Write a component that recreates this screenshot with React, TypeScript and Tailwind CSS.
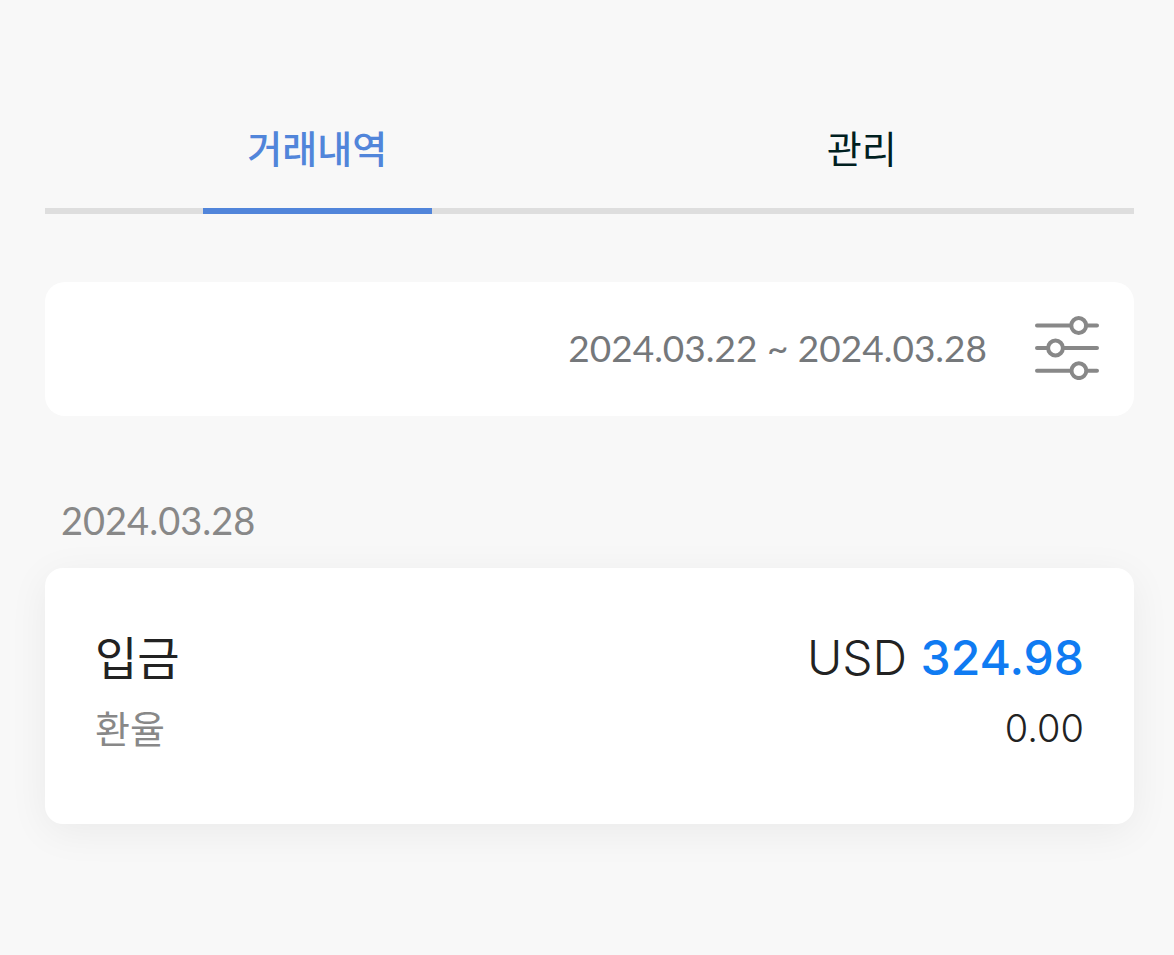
import { useState } from "react";
import clsx from "clsx";

interface Transaction {
  type: string;
  currency: string;
  amount: string;
  rate: string;
}

const tabs = ["거래내역", "관리"];

const groups: { date: string; items: Transaction[] }[] = [
  {
    date: "2024.03.28",
    items: [{ type: "입금", currency: "USD", amount: "324.98", rate: "0.00" }],
  },
];

const FilterIcon = () => (
  <svg
    className="h-16 w-16"
    viewBox="0 0 64 64"
    fill="none"
    stroke="#888888"
    strokeWidth="4"
    strokeLinecap="round"
    aria-hidden="true"
  >
    <path d="M2 9.5H36M52 9.5H62" />
    <circle cx="43.7" cy="9.5" r="7.4" />
    <path d="M2 32H12M28 32H62" />
    <circle cx="20.5" cy="32" r="7.4" />
    <path d="M2 54.7H36M52 54.7H62" />
    <circle cx="43.9" cy="54.7" r="7.4" />
  </svg>
);

const TransactionCard = ({ type, currency, amount, rate }: Transaction) => (
  <li className="flex flex-col gap-2 rounded-[18px] bg-white px-[50px] pt-[58px] pb-[66px] shadow-[0_8px_40px_rgba(0,0,0,0.06)]">
    <div className="flex items-center justify-between leading-[64px] text-[#222222]">
      <span className="text-[46px]">{type}</span>
      <span className="font-['Inter',sans-serif] text-[48px] font-light">
        {currency} <strong className="font-medium text-[#0f7bf2]">{amount}</strong>
      </span>
    </div>
    <div className="flex items-center justify-between text-[38px] leading-[60px]">
      <span className="text-[#888888]">환율</span>
      <span className="font-['Inter',sans-serif] font-light text-[#222222]">{rate}</span>
    </div>
  </li>
);

export default function App() {
  const [active, setActive] = useState(tabs[0]);

  return (
    <main className="min-h-screen bg-[#f8f8f8] pt-[88px] pr-10 pb-[131px] pl-[45px] font-['Lato','Noto_Sans_CJK_KR',sans-serif]">
      <nav className="grid grid-cols-2">
        {tabs.map((tab) => (
          <button
            key={tab}
            type="button"
            onClick={() => setActive(tab)}
            className={clsx(
              "flex flex-col items-center text-[38px] leading-[120px]",
              tab === active ? "font-medium text-[#5185da]" : "text-[#00201f]"
            )}
          >
            {tab}
            <span className="flex h-1.5 w-full justify-center bg-[#dedede]">
              {tab === active && <span className="w-[42%] bg-[#5185da]" />}
            </span>
          </button>
        ))}
      </nav>

      <div className="mt-[68px] flex h-[134px] items-center justify-end gap-12 rounded-[20px] bg-white pr-[35px] pb-[3px] pl-8">
        <p className="text-[37px] text-[#75787b]">2024.03.22 ~ 2024.03.28</p>
        <button type="button" aria-label="조회 조건">
          <FilterIcon />
        </button>
      </div>

      {groups.map(({ date, items }) => (
        <section key={date} className="mt-[74px]">
          <h2 className="px-4 text-[38px] leading-[60px] text-[#888888]">{date}</h2>
          <ul className="mt-[18px] flex flex-col gap-6">
            {items.map((item, i) => (
              <TransactionCard key={i} {...item} />
            ))}
          </ul>
        </section>
      ))}
    </main>
  );
}
